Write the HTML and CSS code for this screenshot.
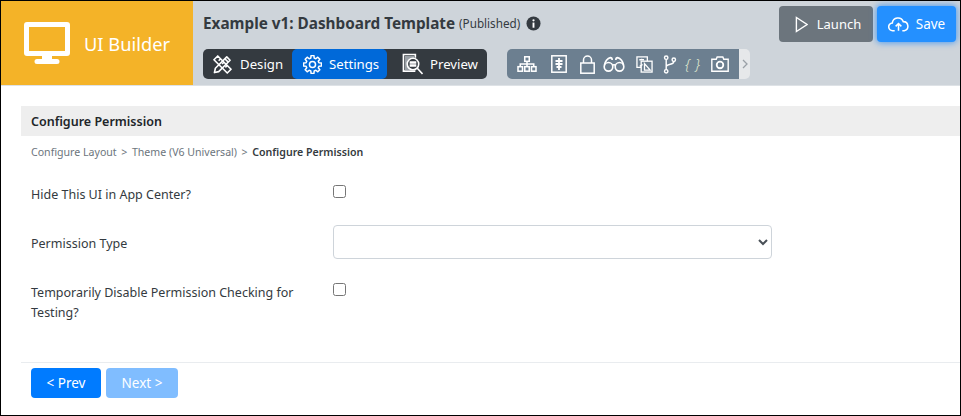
FILE: index.html
```html
<!DOCTYPE html>
<html lang="en">
<head>
<meta charset="utf-8">
<title>UI Builder</title>
<link rel="stylesheet" href="styles.css">
</head>
<body>
<div class="frame">
  <header class="top">
    <div class="brand">
      <svg class="brand-icon" viewBox="0 0 46 42" width="46" height="42"><path fill="#fff" d="M3 0h40a3 3 0 0 1 3 3v28a3 3 0 0 1-3 3H28v3h5a2 2 0 0 1 0 5H13a2 2 0 0 1 0-5h5v-3H3a3 3 0 0 1-3-3V3a3 3 0 0 1 3-3zm2 5v24h36V5z"/></svg>
      <span class="brand-name">UI Builder</span>
    </div>
    <div class="main">
      <div class="title-row">
        <span class="title">Example v1: Dashboard Template</span>
        <span class="status">(Published)</span>
        <svg class="info" viewBox="0 0 16 16" width="15" height="15"><circle cx="8" cy="8" r="7.5" fill="#343a40"/><rect x="7" y="7" width="2" height="5.5" fill="#fff"/><circle cx="8" cy="4.6" r="1.2" fill="#fff"/></svg>
      </div>
      <div class="tool-row">
        <nav class="tabs">
          <a class="tab tab-design">
            <svg viewBox="0 0 20 20" width="19" height="19" fill="none" stroke="#fff" stroke-width="1.7" stroke-linejoin="round"><path d="M1.500 18.500l1-4.500L14.500 2 18 5.500 6 17.500z"/><path d="M12.500 4l3.500 3.500"/><path d="M5 1L1 5l14 14 4-4zM6 6l1.500-1.500M9.500 9.500L11 8M13 13l1.500-1.500"/></svg>
            <span>Design</span>
          </a>
          <a class="tab tab-settings">
            <svg viewBox="0 0 20 20" width="19" height="19" fill="none" stroke="#fff" stroke-width="1.600" stroke-linejoin="round"><circle cx="10" cy="10" r="3.200"/><path d="M8.190 3.240L8.510.620h2.980l.320 2.620 1.690.700 2.090-1.630 2.110 2.110-1.630 2.080.700 1.690 2.620.320v2.980l-2.620.320-.700 1.690 1.630 2.080-2.110 2.110-2.090-1.630-1.690.700-.320 2.620H8.510l-.320-2.620-1.690-.700-2.080 1.630-2.110-2.110 1.630-2.080-.700-1.690-2.620-.320V8.510l2.620-.320.700-1.690-1.630-2.080 2.110-2.110 2.080 1.630z"/></svg>
            <span>Settings</span>
          </a>
          <a class="tab tab-preview">
            <svg viewBox="0 0 22 24" width="21" height="23" fill="none" stroke="#fff" stroke-width="1.700"><path d="M14 19H1.500V1.500H14V5"/><rect x="3" y="3" width="10" height="15" fill="#9aa0a6" stroke="none"/><circle cx="11.500" cy="11.500" r="6" fill="#343a40"/><path d="M8 9.500h7M8 11.500h7M8 13.500h7M16 16l5.500 6"/></svg>
            <span>Preview</span>
          </a>
        </nav>
        <div class="strip">
          <div class="icons">
            <svg class="i-map" viewBox="0 0 22 20" width="20" height="18" fill="none" stroke="#fff" stroke-width="1.700"><rect x="8.500" y="2" width="5" height="5"/><rect x="1" y="13" width="5" height="5"/><rect x="8.500" y="13" width="5" height="5"/><rect x="16" y="13" width="5" height="5"/><path d="M11 7v6M3.500 13v-3h15v3"/></svg>
            <svg class="i-doc" viewBox="0 0 16 18" width="16" height="18" fill="none" stroke="#fff" stroke-width="1.500"><rect x=".8" y=".8" width="14.400" height="16.400"/><path d="M8 3v12M4.500 6h7M4.500 9h7M5.500 12h5" stroke-width="1.800"/></svg>
            <svg class="i-lock" viewBox="0 0 15 19" width="15" height="19" fill="none" stroke="#fff" stroke-width="1.500"><rect x=".8" y="8" width="13.400" height="10.200"/><path d="M3.500 8V5a4 4 0 0 1 8 0v3"/></svg>
            <svg class="i-bino" viewBox="0 0 24 18" width="22" height="17" fill="none" stroke="#fff" stroke-width="1.800"><circle cx="6" cy="11.500" r="4.700"/><circle cx="18" cy="11.500" r="4.700"/><path d="M10 10c1-1 3-1 4 0M1.500 10C2 6 5 2 8 1.500c2 0 2 1 2 2.500M22.500 10C22 6 19 2 16 1.500c-2 0-2 1-2 2.500"/></svg>
            <svg class="i-trans" viewBox="0 0 18 18" width="17" height="17" fill="none" stroke="#fff" stroke-width="1.400"><path d="M12 5.500V1H1v11h4.500"/><rect x="5.500" y="5.500" width="11.500" height="11.500"/><path d="M3.500 4h5M6 3v1M7 9l-3 2M9 8l6 7H9z"/></svg>
            <svg class="i-branch" viewBox="0 0 14 20" width="14" height="19" fill="none" stroke="#fff" stroke-width="1.500"><circle cx="3" cy="2.800" r="1.800"/><circle cx="3" cy="17.200" r="1.800"/><circle cx="11" cy="5" r="1.800"/><path d="M3 4.600v10.800M3 12c2-3 8-1.500 8-5.200"/></svg>
            <span class="braces">{ }</span>
            <svg class="i-cam" viewBox="0 0 19 17" width="18" height="16" fill="none" stroke="#fff" stroke-width="1.500"><path d="M.8 3.500h4.700l1-2.500h6l1 2.500h4.700v12.700H.8z"/><circle cx="9.500" cy="9.500" r="3.500" stroke-width="1.900"/></svg>
          </div>
          <div class="strip-more">
            <svg viewBox="0 0 6 10" width="6" height="10" fill="none" stroke="#9aa0a6" stroke-width="1.300"><path d="M1 1l4 4-4 4"/></svg>
          </div>
        </div>
      </div>
    </div>
    <div class="actions">
      <button class="btn-launch">
        <svg viewBox="0 0 14 18" width="13" height="17" fill="none" stroke="#fff" stroke-width="1.500"><path d="M1.500 1.500v15L13 9z"/></svg>
        <span>Launch</span>
      </button>
      <button class="btn-save">
        <svg viewBox="0 0 22 16" width="21" height="16" fill="none" stroke="#fff" stroke-width="1.600"><path d="M7 15H5a4 4 0 0 1-.500-8A6 6 0 0 1 16 5.500 4.800 4.800 0 0 1 17 15h-2"/><path d="M11 15V8M8 10.500l3-3 3 3"/></svg>
        <span>Save</span>
      </button>
    </div>
  </header>
  <main class="content">
    <h2 class="section">Configure Permission</h2>
    <div class="crumbs">
      <span>Configure Layout</span><span class="sep">&gt;</span><span>Theme (V6 Universal)</span><span class="sep">&gt;</span><strong>Configure Permission</strong>
    </div>
    <form class="form">
      <div class="row row-hide">
        <label class="label" for="hide">Hide This UI in App Center?</label>
        <div class="field"><input id="hide" class="check" type="checkbox"></div>
      </div>
      <div class="row row-type">
        <label class="label" for="ptype">Permission Type</label>
        <div class="field"><select id="ptype" class="select"><option></option></select></div>
      </div>
      <div class="row row-test">
        <label class="label" for="test">Temporarily Disable Permission Checking for Testing?</label>
        <div class="field"><input id="test" class="check" type="checkbox"></div>
      </div>
    </form>
    <footer class="pager">
      <button class="page-btn">&lt; Prev</button>
      <button class="page-btn off">Next &gt;</button>
    </footer>
  </main>
</div>
</body>
</html>
```
FILE: styles.css
```css
* { box-sizing: border-box; }
html, body { margin: 0; padding: 0; height: 100%; background: #fff; }
body { font-family: "Noto Sans", "Open Sans", sans-serif; color: #212529; }
.frame { width: 961px; height: 416px; border: 1px solid #000; overflow: hidden; display: flex; flex-direction: column; }
.top { display: flex; height: 84px; flex: none; background: #ced4da; }
.brand { width: 192px; background: #f4b328; display: flex; align-items: center; padding-left: 23px; flex: none; color: #fff; }
.brand-icon { margin-right: 14px; }
.brand-name { font-size: 18.300px; }
.main { flex: 1; padding: 10px 0 0 10px; }
.title-row { display: flex; align-items: center; height: 24px; color: #343a40; }
.title { font-size: 15.300px; font-weight: 700; }
.status { font-size: 11.700px; margin-left: 4px; }
.info { margin-left: 6px; }
.tool-row { display: flex; margin-top: 14px; }
.tabs { display: flex; background: #343a40; border-radius: 5px; height: 30px; width: 284px; }
.tab { display: flex; align-items: center; color: #fff; font-size: 13.200px; border-radius: 5px; }
.tab svg { flex: none; }
.tab-design { width: 89px; padding-left: 10px; gap: 8px; }
.tab-settings { width: 95px; padding-left: 11px; gap: 7px; background: #0069d9; }
.tab-preview { padding-left: 15px; gap: 7px; }
.strip { display: flex; margin-left: 20px; height: 30px; }
.icons { display: flex; align-items: center; width: 232px; padding-left: 10px; background: #6c7f90; border-radius: 5px 0 0 5px; }
.icons svg { flex: none; }
.i-doc { margin-left: 14px; }
.i-lock { margin-left: 13px; }
.i-bino { margin-left: 8px; }
.i-trans { margin-left: 11px; }
.i-branch { margin-left: 10px; }
.braces { margin-left: 8px; width: 15px; font-style: italic; font-size: 15px; font-weight: 300; color: #dfe7cf; white-space: nowrap; letter-spacing: 0.500px; }
.i-cam { margin-left: 11px; }
.strip-more { width: 11px; background: #e6e8ea; border-radius: 0 5px 5px 0; display: flex; align-items: center; justify-content: center; }
.actions { display: flex; gap: 4px; padding: 5px 4px 0 0; align-items: flex-start; }
.actions button { height: 36px; border: 0; border-radius: 4px; color: #fff; font: 13px "Noto Sans", sans-serif; display: flex; align-items: center; justify-content: center; padding: 0; }
.btn-launch { width: 94px; gap: 9px; padding-left: 4px !important; background: #6c757d; }
.btn-save { width: 79px; gap: 7px; background: #2490ff; box-shadow: 0 0 6px 1px rgba(0, 123, 255, .6); font-size: 13.500px !important; }
.content { flex: 1; padding: 20px 0 0 20px; border-top: 1px solid #dee2e6; display: flex; flex-direction: column; }
.section { margin: 0; background: #eee; height: 30px; line-height: 31px; padding-left: 10px; font-size: 12.500px; font-weight: 600; color: #212529; }
.crumbs { display: flex; gap: 4.600px; padding: 9px 0 0 10px; font-size: 10.600px; line-height: 15px; color: #6c757d; }
.crumbs strong { color: #343a40; font-weight: 600; }
.form { flex: 1; }
.row { display: flex; padding-left: 10px; }
.label { width: 302px; font-size: 12.500px; line-height: 21px; color: #343a40; flex: none; }
.field { width: 439px; }
.check { width: 13px; height: 13px; margin: 0; display: block; }
.row-hide { margin-top: 24px; }
.row-hide .check { margin-top: 1px; }
.row-type { margin-top: 20px; align-items: center; }
.row-type .label { padding-top: 2px; }
.select { width: 439px; height: 34px; display: block; border: 1px solid #ced4da; border-radius: 4px; background: #fff; color: #495057; font: 13px "Noto Sans", sans-serif; }
.row-test { margin-top: 24px; }
.row-test .label { padding-right: 30px; line-height: 20px; }
.pager { display: flex; gap: 5px; height: 53px; padding: 5px 0 0 10px; border-top: 1px solid #e9ecef; flex: none; }
.page-btn { height: 30px; width: 70px; border: 0; border-radius: 4px; background: #007bff; color: #fff; font: 13.500px "Noto Sans", sans-serif; padding: 0; }
.page-btn.off { width: 72px; background: #80bdff; }
```
